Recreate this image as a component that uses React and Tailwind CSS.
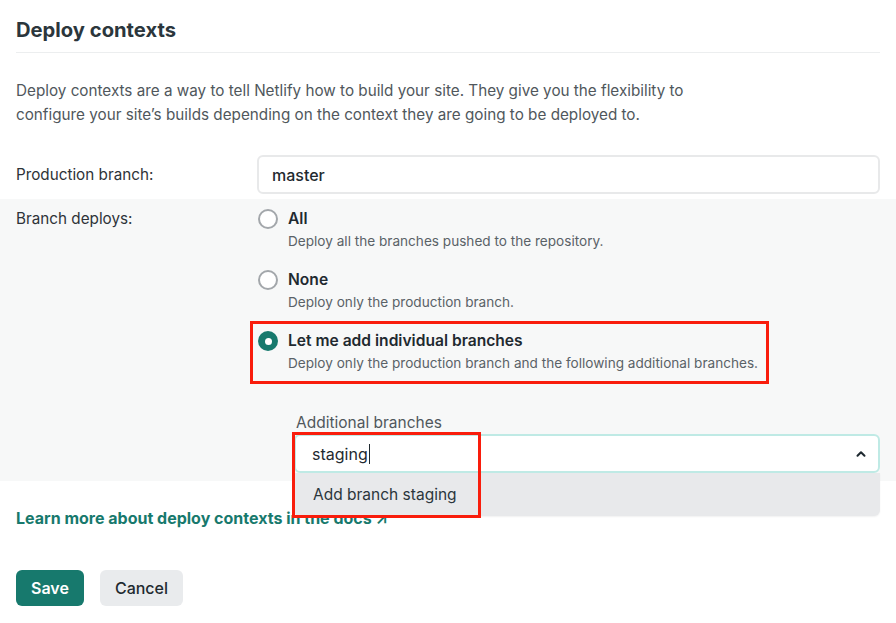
import React from 'react';
import { ChevronUp } from 'lucide-react';

const options = [
  { id: 'all', title: 'All', text: 'Deploy all the branches pushed to the repository.' },
  { id: 'none', title: 'None', text: 'Deploy only the production branch.' },
  {
    id: 'some',
    title: 'Let me add individual branches',
    text: 'Deploy only the production branch and the following additional branches.',
  },
];

const Radio = ({ checked }) =>
  checked ? (
    <span className="mt-[2px] flex h-5 w-5 shrink-0 items-center justify-center rounded-full bg-[#17796d]">
      <span className="h-[7px] w-[7px] rounded-full bg-white" />
    </span>
  ) : (
    <span className="mt-[2px] h-5 w-5 shrink-0 rounded-full border-2 border-[#a3a7ab] bg-white" />
  );

const App = () => {
  const selected = 'some';

  return (
    <div className="min-h-screen bg-white font-['Inter','Liberation_Sans',sans-serif] text-[#2e3338]">
      <div className="px-4 pt-4">
        <h2 className="border-b border-[#eceeef] pb-2 text-[20.2px] font-bold leading-7 text-[#2b363c]">
          Deploy contexts
        </h2>
        <p className="mt-[26px] max-w-[700px] text-[15.25px] leading-6 text-[#50575c]">
          Deploy contexts are a way to tell Netlify how to build your site. They give you the flexibility to
          configure your site’s builds depending on the context they are going to be deployed to.
        </p>
        <div className="mt-[28px] flex items-center">
          <label className="w-[241px] shrink-0 text-[15.25px] leading-6">Production branch:</label>
          <div className="flex h-[39px] flex-1 items-center rounded-md border-2 border-[#e8e9ea] bg-white pl-[13px] text-[16px] font-medium text-[#1f2a30]">
            master
          </div>
        </div>
      </div>

      <div className="mt-[5px] flex bg-[#f7f8f8] px-4 pb-2 pt-2">
        <div className="w-[241px] shrink-0 text-[15.25px] leading-6">Branch deploys:</div>
        <div className="flex-1">
          <div className="flex flex-col gap-[17px]">
            {options.map((o) => (
              <div key={o.id} className="relative flex gap-[10px] pl-px">
                <Radio checked={o.id === selected} />
                <div>
                  <div className="text-[15.6px] font-semibold leading-6 text-[#1f2a30]">{o.title}</div>
                  <div className="text-[13.6px] leading-5 text-[#5a6267]">{o.text}</div>
                </div>
                {o.id === selected && (
                  <div className="absolute left-[-7px] top-[-8px] h-[63px] w-[519px] border-[3px] border-[#f91d0c]" />
                )}
              </div>
            ))}
          </div>

          <div className="ml-[37px] mt-[36px]">
            <div className="pl-[2px] pt-[4px] text-[15.5px] leading-5 text-[#50575c]">Additional branches</div>
            <div className="relative mt-px">
              <div className="flex h-[39px] items-center rounded-md border-2 border-[#bfeae5] bg-white pl-[16px] pr-[10px] text-[16px] text-[#1f2a30]">
                <span>staging</span>
                <span className="ml-px h-[20px] w-px bg-[#1f2a30]" />
                <ChevronUp className="ml-auto text-[#1f2a30]" size={14} strokeWidth={3.5} />
              </div>
              <div className="absolute left-0 right-0 top-full z-10 flex h-[43px] items-center rounded-b-md bg-[#e8e9eb] pl-[19px] text-[15.5px] text-[#2b363c] shadow-[0_1px_2px_rgba(0,0,0,0.06)]">
                Add branch staging
              </div>
              <div className="absolute left-[-2px] top-[-2px] z-20 h-[86px] w-[189px] border-[3px] border-[#f91d0c]" />
            </div>
          </div>
        </div>
      </div>

      <div className="px-4">
        <a href="#" className="mt-[25px] block text-[16px] font-bold leading-6 text-[#17796d]">
          Learn more about deploy contexts in the docs ↗
        </a>
        <div className="mt-[40px] flex gap-4">
          <button className="h-9 rounded-md bg-[#17796d] px-[15px] text-[16px] font-semibold text-white">Save</button>
          <button className="h-9 rounded-md bg-[#e9ebed] px-[15px] text-[16px] font-medium text-[#1f2a30]">Cancel</button>
        </div>
      </div>
    </div>
  );
};

export default App;
